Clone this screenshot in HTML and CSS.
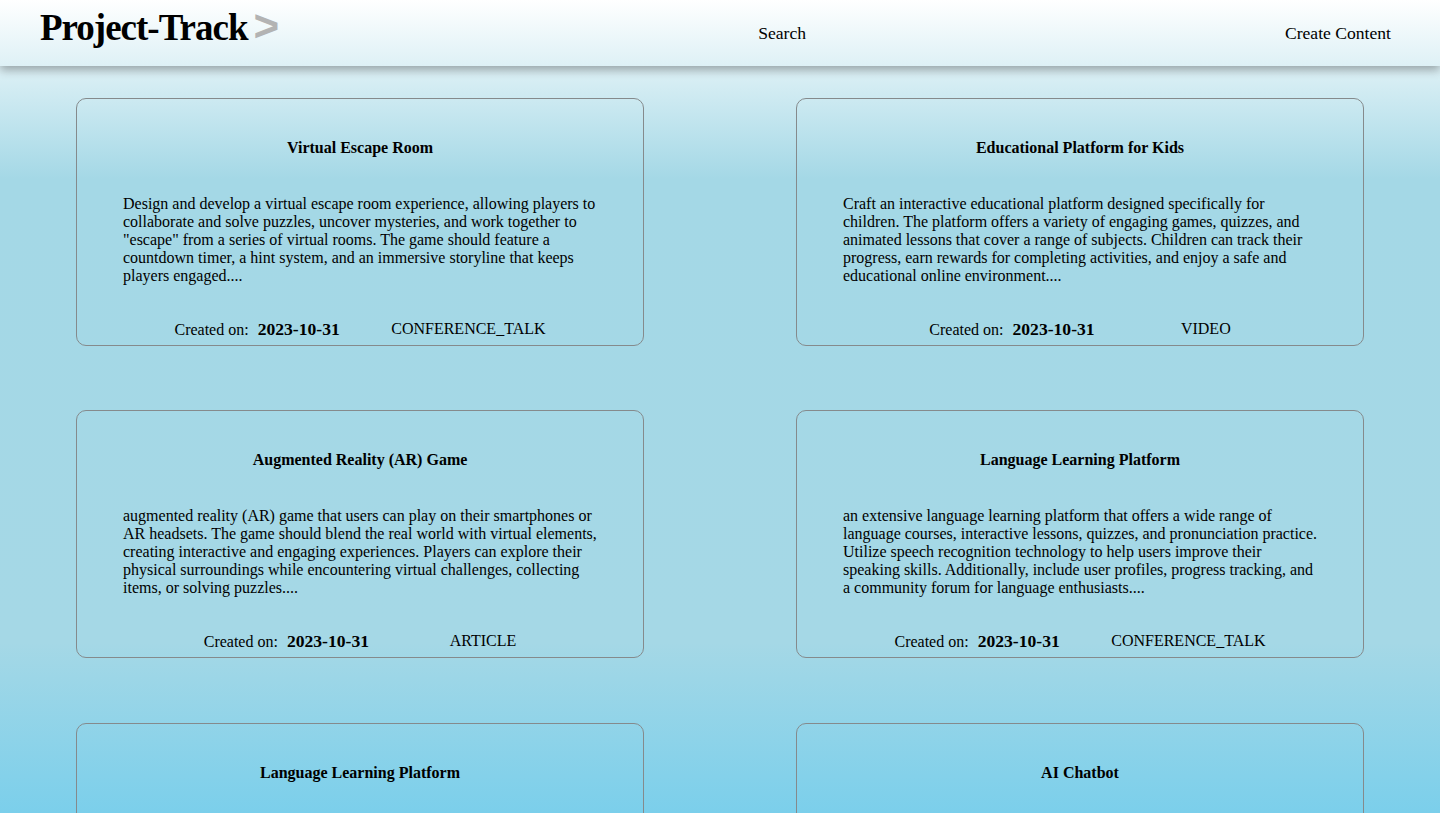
FILE: index.html
```html
<!DOCTYPE html>
<html lang="en">
<head>
<meta charset="utf-8">
<title>Project-Track</title>
<link rel="stylesheet" href="styles.css">
</head>
<body>
<header class="topbar">
  <a class="logo" href="#">Project-Track<span class="logo-arrow">&gt;</span></a>
  <a class="nav-link" href="#">Search</a>
  <a class="nav-link" href="#">Create Content</a>
</header>
<main class="grid">
  <article class="card">
    <h4 class="card-title">Virtual Escape Room</h4>
    <p class="card-desc">Design and develop a virtual escape room experience, allowing players to collaborate and solve puzzles, uncover mysteries, and work together to "escape" from a series of virtual rooms. The game should feature a countdown timer, a hint system, and an immersive storyline that keeps players engaged....</p>
    <div class="card-foot">
      <span class="created"><span class="created-label">Created on:</span><b class="created-date">2023-10-31</b></span>
      <span class="card-type">CONFERENCE_TALK</span>
    </div>
  </article>
  <article class="card">
    <h4 class="card-title">Educational Platform for Kids</h4>
    <p class="card-desc">Craft an interactive educational platform designed specifically for children. The platform offers a variety of engaging games, quizzes, and animated lessons that cover a range of subjects. Children can track their progress, earn rewards for completing activities, and enjoy a safe and educational online environment....</p>
    <div class="card-foot">
      <span class="created"><span class="created-label">Created on:</span><b class="created-date">2023-10-31</b></span>
      <span class="card-type">VIDEO</span>
    </div>
  </article>
  <article class="card">
    <h4 class="card-title">Augmented Reality (AR) Game</h4>
    <p class="card-desc">augmented reality (AR) game that users can play on their smartphones or AR headsets. The game should blend the real world with virtual elements, creating interactive and engaging experiences. Players can explore their physical surroundings while encountering virtual challenges, collecting items, or solving puzzles....</p>
    <div class="card-foot">
      <span class="created"><span class="created-label">Created on:</span><b class="created-date">2023-10-31</b></span>
      <span class="card-type">ARTICLE</span>
    </div>
  </article>
  <article class="card">
    <h4 class="card-title">Language Learning Platform</h4>
    <p class="card-desc">an extensive language learning platform that offers a wide range of language courses, interactive lessons, quizzes, and pronunciation practice. Utilize speech recognition technology to help users improve their speaking skills. Additionally, include user profiles, progress tracking, and a community forum for language enthusiasts....</p>
    <div class="card-foot">
      <span class="created"><span class="created-label">Created on:</span><b class="created-date">2023-10-31</b></span>
      <span class="card-type">CONFERENCE_TALK</span>
    </div>
  </article>
  <article class="card">
    <h4 class="card-title">Language Learning Platform</h4>
    <p class="card-desc">an extensive language learning platform that offers a wide range of language courses, interactive lessons, quizzes, and pronunciation practice. Utilize speech recognition technology to help users improve their speaking skills. Additionally, include user profiles, progress tracking, and a community forum for language enthusiasts....</p>
    <div class="card-foot">
      <span class="created"><span class="created-label">Created on:</span><b class="created-date">2023-10-31</b></span>
      <span class="card-type">VIDEO</span>
    </div>
  </article>
  <article class="card">
    <h4 class="card-title">AI Chatbot</h4>
    <p class="card-desc">Build an AI-powered chatbot that can hold natural conversations with users, answer frequently asked questions, and provide helpful recommendations. The chatbot should learn from interactions over time and integrate easily with websites and messaging apps....</p>
    <div class="card-foot">
      <span class="created"><span class="created-label">Created on:</span><b class="created-date">2023-10-31</b></span>
      <span class="card-type">ARTICLE</span>
    </div>
  </article>
</main>
</body>
</html>
```
FILE: styles.css
```css
html {
  scrollbar-width: none;
}
html::-webkit-scrollbar {
  display: none;
}
body {
  margin: 0;
  min-height: 100vh;
  font-family: "Liberation Serif", "Times New Roman", serif;
  font-size: 16px;
  color: #000;
  background: linear-gradient(to bottom, #ffffff 0%, #a4d8e6 22%, #a5d8e6 79%, #7bcfeb 100%) fixed;
}
a {
  color: inherit;
  text-decoration: none;
}
.topbar {
  position: relative;
  z-index: 2;
  height: 66px;
  box-sizing: border-box;
  padding: 0 49px 0 40px;
  display: flex;
  align-items: center;
  justify-content: space-between;
  box-shadow: 0 4px 9px rgba(0, 0, 0, 0.32);
}
.logo {
  font-size: 37px;
  font-weight: bold;
  letter-spacing: -1px;
  line-height: 1;
  margin-bottom: 14px;
}
.logo-arrow {
  font-family: "Liberation Sans", Arial, sans-serif;
  font-size: 44px;
  line-height: 1;
  color: #b3b3b3;
  margin-left: 6px;
  letter-spacing: 0;
  vertical-align: -1px;
}
.nav-link {
  font-size: 17.6px;
}
.grid {
  display: grid;
  grid-template-columns: repeat(2, 1fr);
  gap: 64.4px 152px;
  padding: 32px 76px;
}
.card {
  box-sizing: border-box;
  height: 248px;
  border: 1px solid #858a8c;
  border-radius: 10px;
  padding: 40px 46px 5px;
  display: flex;
  flex-direction: column;
}
.card-title {
  margin: 0;
  font-size: 16px;
  font-weight: bold;
  text-align: center;
}
.card-desc {
  margin: 38px -4px 0 0;
  line-height: 18px;
}
.card-foot {
  margin-top: auto;
  display: flex;
  justify-content: space-evenly;
  align-items: flex-start;
}
.created-label {
  margin-right: 9px;
}
.created-date {
  font-size: 17.6px;
}
.card-type {
  margin-top: 1px;
}
```
